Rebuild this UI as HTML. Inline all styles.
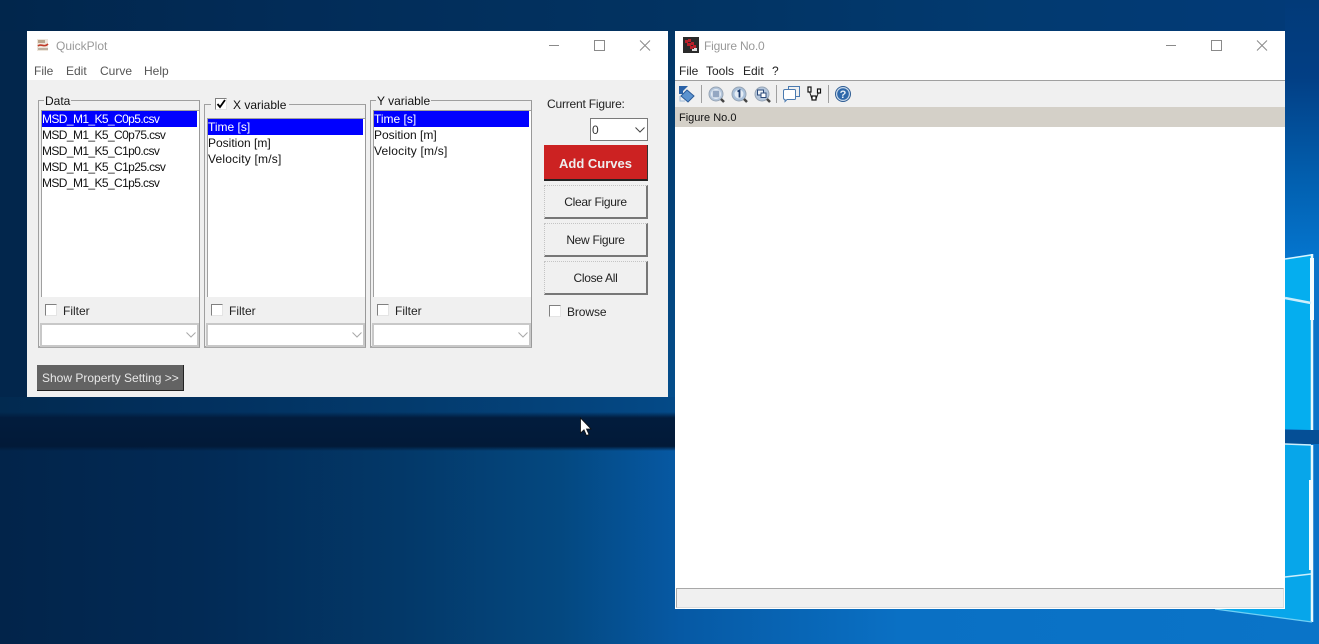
<!DOCTYPE html>
<html><head><meta charset="utf-8"><title>QuickPlot</title>
<style>
html,body{margin:0;padding:0;width:1319px;height:644px;overflow:hidden}
body{position:relative;font:12px "Liberation Sans",sans-serif;color:#111;background:#02264c}
div,span{position:absolute;box-sizing:border-box}
.t{white-space:nowrap;line-height:16px;height:16px}
.m{letter-spacing:-.6px}
.bg{left:0;top:0;width:1319px;height:644px}
.win{background:#f0f0f0}
.wt{background:#fff}
.grp{border:1px solid #a0a0a0;border-right-color:#999;border-bottom:2px solid #a8a8a8}
.lbl{background:#f0f0f0;padding:0 1px}
.list{background:#fff;border-left:1px solid #a0a0a0;border-top:1px solid #a0a0a0}
.sel{background:#0000ff;height:16px}
.cb{width:12px;height:12px;background:#fff;border:1px solid #808080;border-right-color:#e4e4e4;border-bottom-color:#e4e4e4}
.combo{background:#fff;border:2px solid #c8c8c8;height:24px}
.btn{background:#f0f0f0;border:1px dotted #c4c4c4;border-right:2px solid #777;border-bottom:2px solid #777;text-align:center;line-height:32px;color:#222;width:104px;height:34px;left:544px;letter-spacing:-.3px}
.sep{width:1px;background:#a0a0a0;top:85px;height:18px}
svg{position:absolute;overflow:visible}
</style></head><body>
<div class="bg" style="background:linear-gradient(90deg,#02244a 0,#022a55 200px,#033868 400px,#044880 560px,#0659a4 680px,#0a70c4 900px,#0a74c8 1319px)"></div>
<div style="left:0;top:0;width:1319px;height:31px;background:linear-gradient(90deg,#01264c 0,#022c58 300px,#023362 680px,#023a70 1000px,#023a78 1319px)"></div>
<div style="left:0;top:31px;width:27px;height:400px;background:#02264c"></div>
<div style="left:668px;top:31px;width:8px;height:400px;background:linear-gradient(180deg,#023565 0,#04508f 100%)"></div>
<div style="left:0;top:397px;width:676px;height:20px;background:linear-gradient(90deg,#022a50 0,#02305e 200px,#033a6c 400px,#04457f 600px,#044a88 676px)"></div>
<div style="left:0;top:412px;width:676px;height:39px;background:linear-gradient(180deg,rgba(2,28,60,0) 0,#021c3d 15%,#021a38 88%,rgba(2,30,60,0) 100%)"></div>
<div style="left:1285px;top:0;width:34px;height:260px;background:linear-gradient(180deg,#023a78 0,#023f85 30%,#0260b0 70%,#0576cf 100%)"></div>
<div style="left:1285px;top:257px;width:34px;height:387px;background:#0a74c8"></div>
<svg style="left:0;top:0" width="1319" height="644">
<polygon points="1285,259 1311,254 1311,430 1285,429" fill="#05aeef"/>
<polygon points="1285,444 1311,445 1311,622 1217,609 1285,609" fill="#07a6ea"/>
<rect x="1285" y="430" width="34" height="14" fill="#054f96"/>
<path d="M1285 259L1311 255" stroke="#d8f4ff" stroke-width="1.500" fill="none"/>
<path d="M1312 254V430M1312 445V622" stroke="#e8faff" stroke-width="2.500" fill="none"/>
<path d="M1312 258V320M1311 480V570" stroke="#f4fdff" stroke-width="4" fill="none"/>
<path d="M1285 298L1311 303" stroke="#cdeefc" stroke-width="2.500" fill="none"/>
<path d="M1285 444L1311 445M1285 577L1311 574" stroke="#cdeefc" stroke-width="1.500" fill="none"/>
<path d="M1215 609L1312 622" stroke="#6fd0f5" stroke-width="1.200" fill="none"/>
</svg>

<!-- QuickPlot window -->
<div class="win" style="left:27px;top:31px;width:641px;height:366px"></div>
<div class="wt" style="left:27px;top:31px;width:641px;height:49px"></div>
<svg style="left:37px;top:38px" width="12" height="14"><rect x="0" y="1" width="11" height="12" fill="#eee6dc"/><path d="M1 2h7v3H1z" fill="#b9a48c"/><path d="M1 8c3-3 6 2 10-2" stroke="#c03a28" stroke-width="1.600" fill="none"/><path d="M1 11h10" stroke="#8a7a66"/></svg>
<div class="t" style="left:56px;top:38px;color:#999">QuickPlot</div>
<svg style="left:549px;top:40px" width="102" height="11"><path d="M0 5.500h10M45.500 .5h10v10h-10zM91 .5l10 10M101 .5l-10 10" stroke="#8a8a8a" fill="none"/></svg>
<div class="t" style="left:34px;top:63px;color:#555">File</div>
<div class="t" style="left:66px;top:63px;color:#555">Edit</div>
<div class="t" style="left:100px;top:63px;color:#555">Curve</div>
<div class="t" style="left:144px;top:63px;color:#555">Help</div>

<!-- Data -->
<div class="grp" style="left:38px;top:100px;width:162px;height:248px"></div>
<div class="t lbl" style="left:44px;top:93px">Data</div>
<div class="list" style="left:41px;top:110px;width:158px;height:187px"></div>
<div class="sel" style="left:42px;top:111px;width:155px"></div>
<div class="t m" style="left:42px;top:111px;color:#fff">MSD_M1_K5_C0p5.csv</div>
<div class="t m" style="left:42px;top:127px">MSD_M1_K5_C0p75.csv</div>
<div class="t m" style="left:42px;top:143px">MSD_M1_K5_C1p0.csv</div>
<div class="t m" style="left:42px;top:159px">MSD_M1_K5_C1p25.csv</div>
<div class="t m" style="left:42px;top:175px">MSD_M1_K5_C1p5.csv</div>
<div class="cb" style="left:45px;top:304px"></div>
<div class="t" style="left:63px;top:303px;color:#222">Filter</div>
<div class="combo" style="left:40px;top:323px;width:159px"></div>
<svg style="left:186px;top:332px" width="10" height="6"><path d="M.5 .5L5 5 9.500 .5" stroke="#a8a8a8" fill="none"/></svg>

<!-- X variable -->
<div class="grp" style="left:204px;top:104px;width:162px;height:244px"></div>
<div class="lbl" style="left:211px;top:96px;width:78px;height:16px"></div>
<div class="cb" style="left:215px;top:98px"></div>
<svg style="left:216px;top:99px" width="10" height="10"><path d="M1.500 5l2.500 3 5-7" stroke="#000" stroke-width="1.800" fill="none"/></svg>
<div class="t" style="left:233px;top:97px">X variable</div>
<div class="list" style="left:207px;top:118px;width:158px;height:179px"></div>
<div class="sel" style="left:208px;top:119px;width:155px"></div>
<div class="t" style="left:208px;top:119px;color:#fff">Time [s]</div>
<div class="t" style="left:208px;top:135px">Position [m]</div>
<div class="t" style="left:208px;top:151px;letter-spacing:.2px">Velocity [m/s]</div>
<div class="cb" style="left:211px;top:304px"></div>
<div class="t" style="left:229px;top:303px;color:#222">Filter</div>
<div class="combo" style="left:206px;top:323px;width:159px"></div>
<svg style="left:352px;top:332px" width="10" height="6"><path d="M.5 .5L5 5 9.500 .5" stroke="#a8a8a8" fill="none"/></svg>

<!-- Y variable -->
<div class="grp" style="left:370px;top:100px;width:162px;height:248px"></div>
<div class="t lbl" style="left:376px;top:93px">Y variable</div>
<div class="list" style="left:373px;top:110px;width:158px;height:187px"></div>
<div class="sel" style="left:374px;top:111px;width:155px"></div>
<div class="t" style="left:374px;top:111px;color:#fff">Time [s]</div>
<div class="t" style="left:374px;top:127px">Position [m]</div>
<div class="t" style="left:374px;top:143px;letter-spacing:.2px">Velocity [m/s]</div>
<div class="cb" style="left:377px;top:304px"></div>
<div class="t" style="left:395px;top:303px;color:#222">Filter</div>
<div class="combo" style="left:372px;top:323px;width:159px"></div>
<svg style="left:518px;top:332px" width="10" height="6"><path d="M.5 .5L5 5 9.500 .5" stroke="#a8a8a8" fill="none"/></svg>

<!-- Right column -->
<div class="t" style="left:547px;top:96px;color:#222;letter-spacing:-.2px">Current Figure:</div>
<div style="left:590px;top:118px;width:58px;height:23px;background:#fff;border:1px solid #7a7a7a"></div>
<div class="t" style="left:592px;top:122px;color:#333">0</div>
<svg style="left:635px;top:127px" width="10" height="6"><path d="M.5 .5L5 5 9.500 .5" stroke="#444" fill="none"/></svg>
<div style="left:544px;top:145px;width:104px;height:36px;background:#cc2222;border-bottom:2px solid #222;border-right:1px solid #333;text-align:center;line-height:37px;color:#eee;font-weight:bold;font-size:13px">Add Curves</div>
<div class="btn" style="top:185px">Clear Figure</div>
<div class="btn" style="top:223px">New Figure</div>
<div class="btn" style="top:261px">Close All</div>
<div class="cb" style="left:549px;top:305px"></div>
<div class="t" style="left:567px;top:304px;color:#222;letter-spacing:-.1px">Browse</div>
<div style="left:37px;top:365px;width:147px;height:26px;background:#636363;border-right:1px solid #222;border-bottom:1px solid #222;color:#e8e8e8;line-height:26px;padding-left:5px;white-space:nowrap">Show Property Setting &gt;&gt;</div>

<!-- Figure window -->
<div class="wt" style="left:675px;top:31px;width:610px;height:578px"></div>
<svg style="left:683px;top:37px" width="16" height="16"><rect width="16" height="16" fill="#2a2a2a"/><path d="M2 3h3v3H2zM5 2h3v3H5zM4 6h4v3H4zM8 5h3v3H8zM7 9h3v3H7zM10 8h3v3h-3z" fill="#b8202a"/><path d="M11 11h3v3h-3zM9 12h2v2H9z" fill="#ddd"/></svg>
<div class="t" style="left:704px;top:38px;color:#999;letter-spacing:-.2px">Figure No.0</div>
<svg style="left:1166px;top:40px" width="102" height="11"><path d="M0 5.500h10M45.500 .5h10v10h-10zM91 .5l10 10M101 .5l-10 10" stroke="#8a8a8a" fill="none"/></svg>
<div class="t" style="left:679px;top:63px;color:#222">File</div>
<div class="t" style="left:706px;top:63px;color:#222">Tools</div>
<div class="t" style="left:743px;top:63px;color:#222">Edit</div>
<div class="t" style="left:772px;top:63px;color:#222">?</div>
<div style="left:675px;top:80px;width:610px;height:1px;background:#a0a0a0"></div>
<div style="left:675px;top:81px;width:610px;height:26px;background:#f0f0f0"></div>
<svg style="left:678px;top:85px" width="18" height="18"><path d="M1 1h9l-5 5v3H1z" fill="#2a62a8"/><path d="M9 5l7 6-6 6-7-6z" fill="#5c93cf" stroke="#2a5a98"/><path d="M2 11v5h5" stroke="#9ab8d8" fill="none"/></svg>
<div class="sep" style="left:701px"></div>
<svg style="left:708px;top:86px" width="18" height="18"><circle cx="8" cy="8" r="7" fill="#b4c6dc" stroke="#97a5b5"/><circle cx="8" cy="8" r="5" fill="#e6edf5"/><path d="M4.500 6h7M4.500 8h7M4.500 10h7M6 4.500v7M8 4.500v7M10 4.500v7" stroke="#3b5a8a" stroke-width=".6"/><path d="M13 13l3 3" stroke="#444" stroke-width="2.500"/></svg>
<svg style="left:731px;top:86px" width="18" height="18"><circle cx="8" cy="8" r="7" fill="#a9c0da" stroke="#97a5b5"/><circle cx="8" cy="8" r="4.500" fill="#e4ecf5"/><path d="M6.500 5.500L8.500 4.500V11.500" stroke="#1f3f70" stroke-width="1.800" fill="none"/><path d="M13 13l3 3" stroke="#444" stroke-width="2.500"/></svg>
<svg style="left:754px;top:86px" width="18" height="18"><circle cx="8" cy="8" r="7" fill="#b4c6dc" stroke="#97a5b5"/><rect x="3.500" y="4" width="6" height="5" fill="#eef3f8" stroke="#2b4a7a"/><rect x="7" y="7" width="5" height="4.500" fill="#fff" stroke="#2b4a7a"/><path d="M13 13l3 3" stroke="#444" stroke-width="2.500"/></svg>
<div class="sep" style="left:776px"></div>
<svg style="left:783px;top:86px" width="17" height="16"><path d="M5.500 3.500V.5h11v10h-4" stroke="#4a7ab0" fill="none"/><path d="M2 3.500h9.500a1 1 0 0 1 1 1v8a1 1 0 0 1-1 1H4l-2 2v-2a1.500 1.500 0 0 1-1.500-1.500v-7a1.500 1.500 0 0 1 1.500-1.500z" fill="#fff" stroke="#4a7ab0"/></svg>
<svg style="left:806px;top:86px" width="17" height="16"><path d="M3 4l3 9h4l3-8" stroke="#222" fill="none"/><rect x="2" y="1" width="3" height="5" fill="#fff" stroke="#111" stroke-width="1.200"/><rect x="6" y="10" width="4" height="4" fill="#fff" stroke="#111" stroke-width="1.200"/><rect x="11.500" y="3" width="3" height="4" fill="#fff" stroke="#111" stroke-width="1.200"/></svg>
<div class="sep" style="left:828px"></div>
<svg style="left:835px;top:86px" width="16" height="16"><circle cx="8" cy="8" r="7.500" fill="#c8d8ea" stroke="#2e5d94"/><circle cx="8" cy="8" r="5.800" fill="#2f68aa"/><text x="8" y="12" font-family="Liberation Sans" font-size="11" font-weight="bold" text-anchor="middle" fill="#e8f0f8">?</text></svg>
<div style="left:675px;top:107px;width:610px;height:20px;background:#d4d0c8"></div>
<div class="t" style="left:679px;top:110px;font-size:11px;color:#111">Figure No.0</div>
<div style="left:676px;top:588px;width:608px;height:20px;background:#f0f0f0;border:1px solid #a8a8a8;border-bottom-color:#ddd;border-right-color:#ddd"></div>

<!-- cursor -->
<svg style="left:579px;top:417px" width="13" height="20"><path d="M1.500 1V16L5 12.800 7.500 18.500 10 17.500 7.500 12H12z" fill="#fff" stroke="#111" stroke-width=".8"/></svg>
</body></html>
